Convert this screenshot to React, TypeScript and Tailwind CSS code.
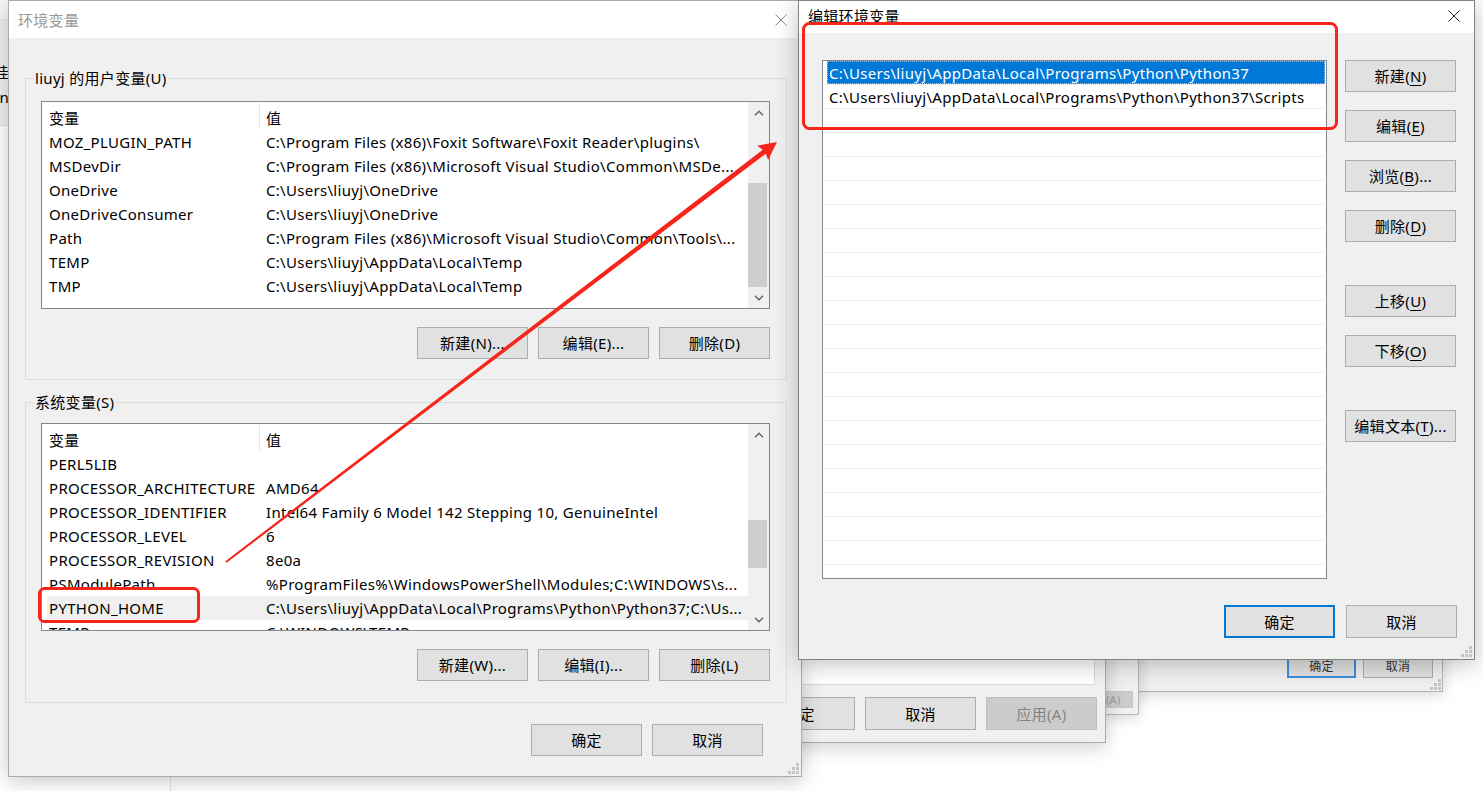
import React from "react";

const FONT = "font-['Noto_Sans','Noto_Sans_CJK_SC',sans-serif] tracking-[0.3px]";

function Btn({
  children,
  className = "",
  variant = "normal",
}: {
  children: React.ReactNode;
  className?: string;
  variant?: "normal" | "disabled" | "default";
}) {
  const look =
    variant === "disabled"
      ? "border border-[#bfbfbf] bg-[#cccccc] text-[#838383]"
      : variant === "default"
      ? "border-2 border-[#0078d7] bg-[#e1e1e1] text-black"
      : "border border-[#adadad] bg-[#e1e1e1] text-black";
  return (
    <div
      className={`w-[111px] shrink-0 flex items-center justify-center text-[15px] leading-[20px] ${look} ${className}`}
    >
      {children}
    </div>
  );
}

function Chevron({ up }: { up: boolean }) {
  return (
    <svg width="10" height="6" viewBox="0 0 10 6">
      {up ? (
        <polyline points="1,5.2 5,1.2 9,5.2" fill="none" stroke="#606060" strokeWidth="1.4" />
      ) : (
        <polyline points="1,0.8 5,4.8 9,0.8" fill="none" stroke="#606060" strokeWidth="1.4" />
      )}
    </svg>
  );
}

function CloseX({ color }: { color: string }) {
  return (
    <svg width="12" height="12" viewBox="0 0 12 12">
      <line x1="0.5" y1="0.5" x2="11.5" y2="11.5" stroke={color} strokeWidth="1" />
      <line x1="11.5" y1="0.5" x2="0.5" y2="11.5" stroke={color} strokeWidth="1" />
    </svg>
  );
}

function Grip() {
  return (
    <svg width="11" height="11" viewBox="0 0 11 11">
      <rect x="8" y="0" width="3" height="3" fill="#c4c4c4" />
      <rect x="4" y="4" width="3" height="3" fill="#c4c4c4" />
      <rect x="8" y="4" width="3" height="3" fill="#c4c4c4" />
      <rect x="0" y="8" width="3" height="3" fill="#c4c4c4" />
      <rect x="4" y="8" width="3" height="3" fill="#c4c4c4" />
      <rect x="8" y="8" width="3" height="3" fill="#c4c4c4" />
    </svg>
  );
}

type Row = { name: string; value: string };

function VarList({
  rows,
  spacer,
  thumb,
  selected,
}: {
  rows: Row[];
  spacer: number;
  thumb: number;
  selected: number;
}) {
  return (
    <div className="h-[208px] border border-[#828790] bg-white flex text-[15px] leading-[20px] text-black">
      <div className="flex-1 flex flex-col overflow-hidden">
        <div className="h-[28px] shrink-0 flex items-start">
          <div className="w-[217px] shrink-0 pl-[7px] pt-[6px]">变量</div>
          <div className="w-px h-[26px] mt-[1px] bg-[#e5e5e5]" />
          <div className="pl-[6px] pt-[6px]">值</div>
        </div>
        {rows.map((r, i) => (
          <div
            key={i}
            className={`h-[24px] shrink-0 ml-[5px] flex items-center whitespace-nowrap ${
              i === selected ? "bg-[#f0f0f0]" : ""
            }`}
          >
            <div className="w-[212px] shrink-0 overflow-hidden pl-[2px]">{r.name}</div>
            <div className="flex-1 overflow-hidden pl-[7px]">{r.value}</div>
          </div>
        ))}
      </div>
      <div className="w-[21px] shrink-0 bg-[#f0f0f0] flex flex-col">
        <div className="h-[21px] shrink-0 flex items-center justify-center">
          <Chevron up />
        </div>
        <div className="shrink-0" style={{ height: spacer }} />
        <div className="shrink-0 mr-[2px] bg-[#cdcdcd]" style={{ height: thumb }} />
        <div className="flex-1" />
        <div className="h-[21px] shrink-0 flex items-center justify-center">
          <Chevron up={false} />
        </div>
      </div>
    </div>
  );
}

const userRows: Row[] = [
  { name: "MOZ_PLUGIN_PATH", value: "C:\\Program Files (x86)\\Foxit Software\\Foxit Reader\\plugins\\" },
  { name: "MSDevDir", value: "C:\\Program Files (x86)\\Microsoft Visual Studio\\Common\\MSDe..." },
  { name: "OneDrive", value: "C:\\Users\\liuyj\\OneDrive" },
  { name: "OneDriveConsumer", value: "C:\\Users\\liuyj\\OneDrive" },
  { name: "Path", value: "C:\\Program Files (x86)\\Microsoft Visual Studio\\Common\\Tools\\..." },
  { name: "TEMP", value: "C:\\Users\\liuyj\\AppData\\Local\\Temp" },
  { name: "TMP", value: "C:\\Users\\liuyj\\AppData\\Local\\Temp" },
];

const sysRows: Row[] = [
  { name: "PERL5LIB", value: "" },
  { name: "PROCESSOR_ARCHITECTURE", value: "AMD64" },
  { name: "PROCESSOR_IDENTIFIER", value: "Intel64 Family 6 Model 142 Stepping 10, GenuineIntel" },
  { name: "PROCESSOR_LEVEL", value: "6" },
  { name: "PROCESSOR_REVISION", value: "8e0a" },
  { name: "PSModulePath", value: "%ProgramFiles%\\WindowsPowerShell\\Modules;C:\\WINDOWS\\s..." },
  { name: "PYTHON_HOME", value: "C:\\Users\\liuyj\\AppData\\Local\\Programs\\Python\\Python37;C:\\Us..." },
  { name: "TEMP", value: "C:\\WINDOWS\\TEMP" },
];

function U({ children }: { children: React.ReactNode }) {
  return <span className="underline underline-offset-[3px] decoration-1">{children}</span>;
}

export default function App() {
  const editRows = Array.from({ length: 21 }, (_, i) => i);
  return (
    <div className={`relative w-[1483px] h-[791px] overflow-hidden bg-white ${FONT}`}>
      {/* window at far left, behind */}
      <div className="absolute left-[-300px] top-0 w-[310px] h-[126px] bg-[#f0f0f0] border-b border-[#e0e0e0] flex flex-col items-end text-[15px] leading-[20px] text-black">
        <div className="h-[20px] w-full border-b border-[#e6e6e6] bg-[#f7f7f7]" />
        <div className="mt-[42px] pr-[1px]">挂</div>
        <div className="mt-[5px] pr-[1px]">n</div>
      </div>
      <div className="absolute left-[170px] top-[760px] w-px h-[31px] bg-[#e2e2e2]" />

      {/* window C (small scale, behind) */}
      <div className="absolute left-[900px] top-[320px] w-[543px] h-[372px] border border-[#b4b4b4] bg-[#f0f0f0] shadow-[0_2px_14px_rgba(0,0,0,0.18)] flex flex-col justify-end">
        <div className="flex justify-end gap-[7px] pr-[9px] pb-[13px] text-[12px] leading-[16px] text-[#333]">
          <div className="w-[69px] h-[23px] border-2 border-[#3c8fdc] bg-[#e1e1e1] flex items-center justify-center">
            确定
          </div>
          <div className="w-[70px] h-[23px] border border-[#adadad] bg-[#e1e1e1] flex items-center justify-center">
            取消
          </div>
        </div>
        <div className="absolute right-[1px] bottom-[1px]">
          <Grip />
        </div>
      </div>

      {/* window D (small scale, behind) */}
      <div className="absolute left-[650px] top-[300px] w-[489px] h-[415px] border border-[#b4b4b4] bg-[#f0f0f0] shadow-[0_2px_14px_rgba(0,0,0,0.18)] flex flex-col justify-end">
        <div className="flex justify-end pr-[5px] pb-[6px] text-[11px] leading-[14px] text-[#9a9a9a]">
          <div className="w-[62px] h-[17px] border border-[#c4c4c4] bg-[#cccccc] flex items-center justify-center">
            应用(A)
          </div>
        </div>
      </div>

      {/* window E (System properties) */}
      <div className="absolute left-[560px] top-[250px] w-[546px] h-[493px] border border-[#aaaaaa] bg-[#f0f0f0] shadow-[0_4px_18px_rgba(0,0,0,0.2)] flex flex-col">
        <div className="flex-1 mt-[40px] ml-[10px] mr-[10px] border border-[#d9d9d9] bg-white" />
        <div className="flex justify-end gap-[10px] pr-[8px] mt-[12px] mb-[12px]">
          <Btn className="h-[33px]">确定</Btn>
          <Btn className="h-[33px]">取消</Btn>
          <Btn className="h-[33px]" variant="disabled">
            应用(A)
          </Btn>
        </div>
      </div>

      {/* window A: 环境变量 */}
      <div className="absolute left-[8px] top-0 w-[794px] h-[777px] border border-[#aaaaaa] bg-[#f0f0f0] shadow-[0_4px_20px_rgba(0,0,0,0.22)] flex flex-col">
        <div className="h-[37px] shrink-0 bg-white flex items-center justify-between pl-[9px] pr-[14px]">
          <div className="text-[15px] leading-[20px] text-[#999999]">环境变量</div>
          <CloseX color="#8a8a8a" />
        </div>

        <div className="mt-[40px] ml-[16px] mr-[14px] border border-[#dcdcdc] px-[15px] pr-[16px] pb-[20px] flex flex-col">
          <div className="-mt-[11px] ml-[-7px] w-fit px-[1px] bg-[#f0f0f0] text-[15px] leading-[20px] text-black">
            liuyj 的用户变量(U)
          </div>
          <div className="mt-[13px]">
            <VarList rows={userRows} spacer={60} thumb={104} selected={-1} />
          </div>
          <div className="mt-[18px] flex justify-end gap-[10px]">
            <Btn className="h-[32px]">新建(N)...</Btn>
            <Btn className="h-[32px]">编辑(E)...</Btn>
            <Btn className="h-[32px]">删除(D)</Btn>
          </div>
        </div>

        <div className="mt-[22px] ml-[16px] mr-[14px] border border-[#dcdcdc] px-[15px] pr-[16px] pb-[21px] flex flex-col">
          <div className="-mt-[11px] ml-[-7px] w-fit px-[1px] bg-[#f0f0f0] text-[15px] leading-[20px] text-black">
            系统变量(S)
          </div>
          <div className="mt-[11px]">
            <VarList rows={sysRows} spacer={75} thumb={48} selected={6} />
          </div>
          <div className="mt-[18px] flex justify-end gap-[10px]">
            <Btn className="h-[32px]">新建(W)...</Btn>
            <Btn className="h-[32px]">编辑(I)...</Btn>
            <Btn className="h-[32px]">删除(L)</Btn>
          </div>
        </div>

        <div className="mt-[21px] flex justify-end gap-[10px] pr-[38px]">
          <Btn className="h-[32px]">确定</Btn>
          <Btn className="h-[32px]">取消</Btn>
        </div>
        <div className="absolute right-[2px] bottom-[2px]">
          <Grip />
        </div>
      </div>

      {/* window B: 编辑环境变量 */}
      <div className="absolute left-[798px] top-0 w-[677px] h-[660px] border border-[#788a77] bg-[#f0f0f0] shadow-[0_4px_22px_rgba(0,0,0,0.25)] flex flex-col text-[15px] leading-[20px] text-black">
        <div className="h-[32px] shrink-0 bg-white flex items-start justify-between pl-[9px] pr-[14px]">
          <div className="pt-[5px]">编辑环境变量</div>
          <div className="pt-[9px]">
            <CloseX color="#222222" />
          </div>
        </div>
        <div className="flex mt-[27px] ml-[23px]">
          <div className="w-[505px] h-[519px] border border-[#828790] bg-white px-[1px] flex flex-col overflow-hidden">
            {editRows.map((i) => (
              <div key={i} className="h-[24px] shrink-0 border-b border-[#f0f0f0] flex whitespace-nowrap">
                {i === 0 ? (
                  <div className="flex-1 ml-[3px] bg-[#0078d7] text-white pl-[2px] flex items-center outline-1 outline-dotted outline-[#9cc9ef] -outline-offset-1">
                    C:\Users\liuyj\AppData\Local\Programs\Python\Python37
                  </div>
                ) : i === 1 ? (
                  <div className="flex-1 pl-[5px] flex items-center">
                    C:\Users\liuyj\AppData\Local\Programs\Python\Python37\Scripts
                  </div>
                ) : null}
              </div>
            ))}
          </div>
          <div className="ml-[18px] flex flex-col">
            <Btn className="h-[32px]">
              新建(<U>N</U>)
            </Btn>
            <Btn className="h-[32px] mt-[18px]">
              编辑(<U>E</U>)
            </Btn>
            <Btn className="h-[32px] mt-[18px]">
              浏览(<U>B</U>)...
            </Btn>
            <Btn className="h-[32px] mt-[18px]">
              删除(<U>D</U>)
            </Btn>
            <Btn className="h-[32px] mt-[43px]">
              上移(<U>U</U>)
            </Btn>
            <Btn className="h-[32px] mt-[18px]">
              下移(<U>O</U>)
            </Btn>
            <Btn className="h-[32px] mt-[43px]">
              编辑文本(<U>T</U>)...
            </Btn>
          </div>
        </div>
        <div className="mt-[26px] flex justify-end gap-[11px] pr-[17px]">
          <Btn className="h-[33px]" variant="default">
            确定
          </Btn>
          <Btn className="h-[33px]">取消</Btn>
        </div>
        <div className="absolute right-[2px] bottom-[2px]">
          <Grip />
        </div>
      </div>

      {/* annotations */}
      <svg className="absolute left-0 top-0 pointer-events-none" width="1483" height="791" viewBox="0 0 1483 791">
        <rect x="39.5" y="588.5" width="159" height="33" rx="5" fill="none" stroke="#f5251b" strokeWidth="3" />
        <rect x="803.5" y="23.5" width="533" height="105" rx="6" fill="none" stroke="#f5251b" strokeWidth="3" />
        <polygon
          points="225.4,561.2 762.8,149.7 757.2,145.7 777,142 768.2,160.1 765.8,153.7 226.6,562.8"
          fill="#f5251b"
        />
      </svg>
    </div>
  );
}
